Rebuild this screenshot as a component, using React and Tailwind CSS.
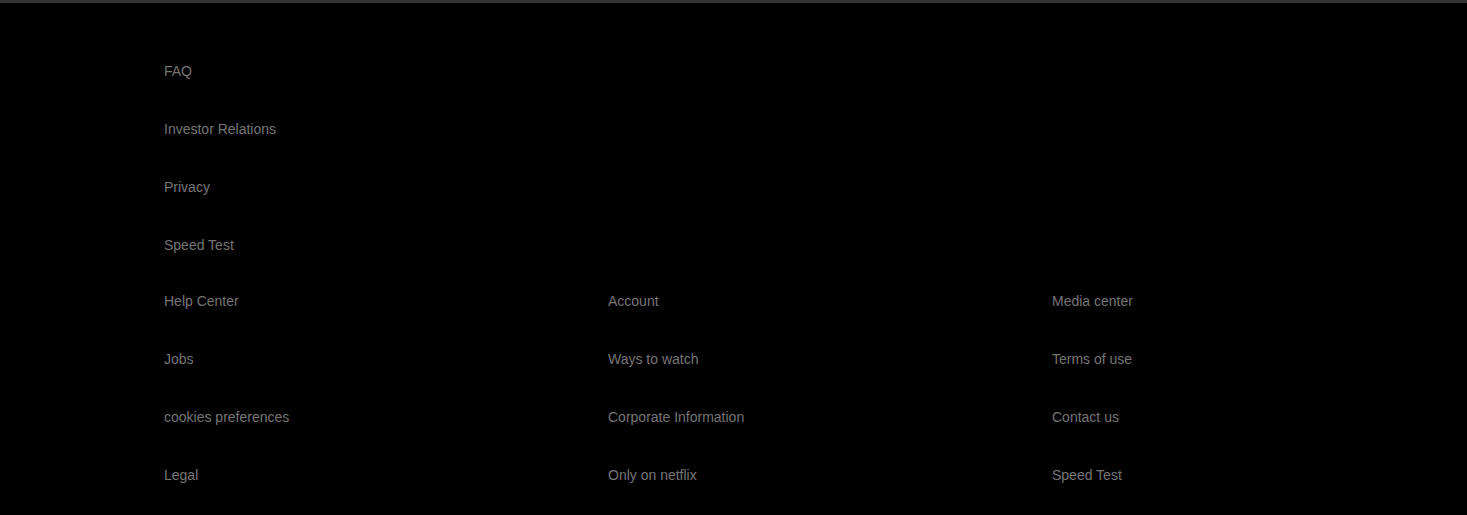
import React from 'react';

const topLinks = ['FAQ', 'Investor Relations', 'Privacy', 'Speed Test'];

const gridLinks = [
    'Help Center', 'Account', 'Media center',
    'Jobs', 'Ways to watch', 'Terms of use',
    'cookies preferences', 'Corporate Information', 'Contact us',
    'Legal', 'Only on netflix', 'Speed Test',
];

const FooterLink = ({ label }) => (
    <a href="#" className="block text-[14px] leading-[16px] text-[#757575] w-max">
        {label}
    </a>
);

export default function App() {
    return (
        <div
            className="min-h-[515px] bg-black border-t-[3px] border-[#333333]"
            style={{ fontFamily: '"Liberation Sans", Arial, sans-serif' }}
        >
            <footer className="pl-[164px] pt-[60px] pb-[32px]">
                {/* single column links */}
                <div className="flex flex-col gap-[42px]">
                    {topLinks.map((l) => (
                        <FooterLink key={l} label={l} />
                    ))}
                </div>

                {/* three column links */}
                <div className="mt-[40px] grid grid-cols-[444px_444px_1fr] gap-y-[42px]">
                    {gridLinks.map((l, i) => (
                        <FooterLink key={i} label={l} />
                    ))}
                </div>
            </footer>
        </div>
    );
}
